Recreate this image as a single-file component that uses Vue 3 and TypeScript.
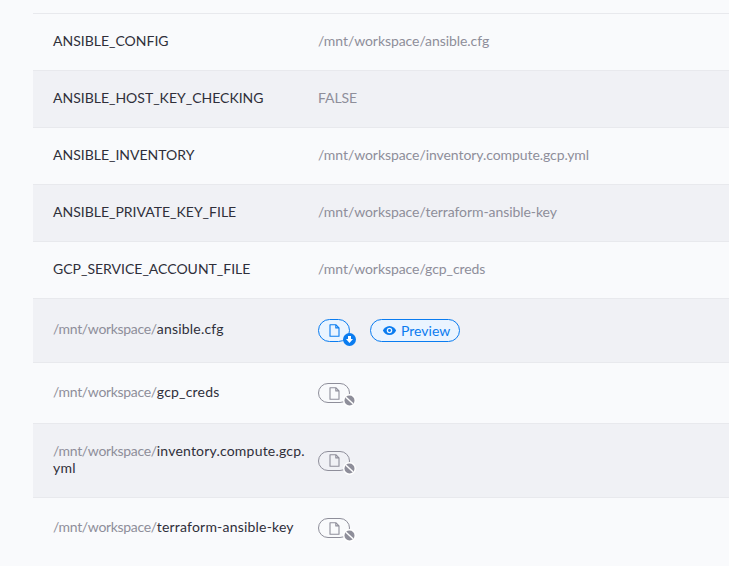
<script setup lang="ts">
interface EnvRow {
  name: string
  value: string
}
interface FileRow {
  dir: string
  file: string
  wrapped?: string
  active?: boolean
}

const envRows: EnvRow[] = [
  { name: 'ANSIBLE_CONFIG', value: '/mnt/workspace/ansible.cfg' },
  { name: 'ANSIBLE_HOST_KEY_CHECKING', value: 'FALSE' },
  { name: 'ANSIBLE_INVENTORY', value: '/mnt/workspace/inventory.compute.gcp.yml' },
  { name: 'ANSIBLE_PRIVATE_KEY_FILE', value: '/mnt/workspace/terraform-ansible-key' },
  { name: 'GCP_SERVICE_ACCOUNT_FILE', value: '/mnt/workspace/gcp_creds' },
]

const fileRows: FileRow[] = [
  { dir: '/mnt/workspace/', file: 'ansible.cfg', active: true },
  { dir: '/mnt/workspace/', file: 'gcp_creds' },
  { dir: '/mnt/workspace/', file: 'inventory.compute.gcp.', wrapped: 'yml' },
  { dir: '/mnt/workspace/', file: 'terraform-ansible-key' },
]
</script>

<template>
  <div class="page">
    <div class="table">
      <div v-for="row in envRows" :key="row.name" class="row row--env">
        <div class="cell-name">{{ row.name }}</div>
        <div class="cell-value">{{ row.value }}</div>
      </div>
      <div v-for="row in fileRows" :key="row.file" class="row row--file">
        <div class="cell-name cell-name--file">
          <span class="dir">{{ row.dir }}</span><span class="file">{{ row.file }}</span>
          <template v-if="row.wrapped"><br /><span class="file">{{ row.wrapped }}</span></template>
        </div>
        <div class="cell-actions">
          <span class="file-btn" :class="{ 'is-active': row.active }">
            <svg class="doc" viewBox="0 0 11 13" width="11" height="13" aria-hidden="true">
              <path d="M1 .7h5.800L10 3.900v8.400H1z M6.800 .7v3.200H10" fill="none" stroke="currentColor" stroke-width="1.100" stroke-linejoin="round" />
            </svg>
            <span class="badge">
              <svg v-if="row.active" viewBox="0 0 13 13" width="13" height="13" aria-hidden="true">
                <circle cx="6.500" cy="6.500" r="6.500" fill="#0a7cf0" />
                <path d="M5 3h3v3h2L6.500 10 3 6h2z" fill="#fff" />
              </svg>
              <svg v-else viewBox="0 0 13 13" width="13" height="13" aria-hidden="true">
                <circle cx="6.500" cy="6.500" r="6.500" fill="#fff" />
                <circle cx="6.500" cy="6.500" r="5" fill="#8e8e9a" />
                <path d="M3 3.200l7 6.600" stroke="#fff" stroke-width="1.500" />
              </svg>
            </span>
          </span>
          <span v-if="row.active" class="preview-btn">
            <svg viewBox="0 0 16 12" width="15" height="11" aria-hidden="true">
              <path d="M8 1C4.600 1 2 3.400.8 6 2 8.600 4.600 11 8 11s6-2.400 7.200-5C14 3.400 11.400 1 8 1z" fill="#0a7cf0" />
              <circle cx="8" cy="6" r="3" fill="#eaf4ff" />
              <circle cx="8" cy="6" r="1.600" fill="#0a7cf0" />
            </svg>
            Preview
          </span>
        </div>
      </div>
    </div>
  </div>
</template>

<style scoped>
.page {
  height: 566px;
  overflow: hidden;
  padding: 13px 0 0 33px;
  box-sizing: border-box;
  background: #f9fafc;
  font-family: Lato, "Noto Sans", sans-serif;
  font-size: 14px;
  color: #2f2f3a;
}

.table {
  border-top: 1px solid #e8e9ed;
}

.row {
  display: grid;
  grid-template-columns: 272px 1fr;
  align-items: center;
  border-bottom: 1px solid #e8e9ed;
  box-sizing: border-box;
}

.row:nth-child(even) {
  background: #f0f1f5;
}

.row:last-child {
  border-bottom: 0;
}

.row--env {
  height: 57px;
  padding-bottom: 4px;
}

.row--file {
  padding: 20px 0;
}

.cell-name {
  padding-left: 20px;
  line-height: 17px;
}

.cell-name--file {
  line-height: 16.5px;
  transform: translateY(-1px);
}

.cell-value {
  padding-left: 13px;
  letter-spacing: -0.07px;
  color: #8e8e9a;
}

.cell-actions {
  display: flex;
  align-items: center;
  gap: 20px;
  padding-left: 13px;
}

.dir {
  letter-spacing: -0.33px;
  color: #8e8e9a;
}

.file {
  letter-spacing: 0.2px;
}

.file-btn {
  position: relative;
  display: inline-flex;
  align-items: center;
  justify-content: center;
  width: 32px;
  height: 20px;
  border: 1px solid #8e8e9a;
  border-radius: 10px;
  box-sizing: border-box;
  color: #8e8e9a;
}

.file-btn.is-active {
  height: 23px;
  border-color: #0a7cf0;
  border-radius: 12px;
  background: #eaf4ff;
  color: #0a7cf0;
}

.badge {
  position: absolute;
  right: -7px;
  bottom: -5px;
  width: 13px;
  height: 13px;
}

.badge svg,
.doc {
  display: block;
}

.preview-btn {
  display: inline-flex;
  align-items: center;
  gap: 4px;
  height: 23px;
  padding: 0 9px 0 11px;
  border: 1px solid #0a7cf0;
  border-radius: 12px;
  box-sizing: border-box;
  background: #eaf4ff;
  color: #0a7cf0;
}
</style>
